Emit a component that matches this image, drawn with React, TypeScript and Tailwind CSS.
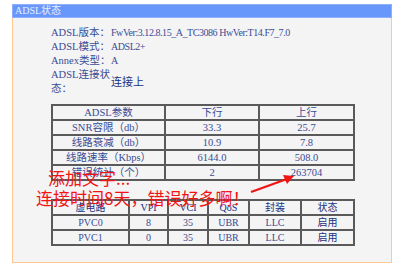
import React from "react";

const cjk = '"Liberation Serif", "Noto Sans CJK SC", serif';

const info: [string, string][] = [
  ["ADSL版本：", "FwVer:3.12.8.15_A_TC3086 HwVer:T14.F7_7.0"],
  ["ADSL模式：", "ADSL2+"],
  ["Annex类型：", "A"],
];

const stats = [
  ["SNR容限（db）", "33.3", "25.7"],
  ["线路衰减（db）", "10.9", "7.8"],
  ["线路速率（Kbps）", "6144.0", "508.0"],
  ["错误统计（个）", "2", "263704"],
];

const pvcs = [
  ["PVC0", "8", "35", "UBR", "LLC", "启用"],
  ["PVC1", "0", "35", "UBR", "LLC", "启用"],
];

const cell = "border-2 border-[#5a5a5a] p-0 text-center h-[15px] leading-[11px]";

export default function App() {
  return (
    <div
      className="w-[400px] h-[266px] bg-white relative overflow-hidden text-[11px] text-[#3a4c94]"
      style={{ fontFamily: cjk }}
    >
      <div className="pt-[4px] pl-[12px] w-[392px]">
        <div className="h-[14px] bg-[#6797fa] border border-[#8db0fc] text-[10px] leading-[12px] pl-[2px] text-[#e8eeff]">
          ADSL状态
        </div>
        <div className="h-[245px] bg-[#f4f4f4] border-l border-r border-b border-[#ffc88e] pt-[8px] pl-[38px]">
          <div className="flex flex-col text-[10.5px] leading-[14px]">
            {info.map(([k, v]) => (
              <div key={k} className="flex h-[14px] items-center">
                <div className="w-[60px] whitespace-nowrap">{k}</div>
                <div className="whitespace-nowrap text-[10px] tracking-[-0.45px]">{v}</div>
              </div>
            ))}
            <div className="flex items-center h-[28px]">
              <div className="w-[60px] whitespace-nowrap">
                ADSL连接状
                <br />
                态：
              </div>
              <div className="text-[#22307e] text-[11px]">连接上</div>
            </div>
          </div>

          <table className="mt-[8px] border-collapse table-fixed w-[302px] text-[10.5px]">
            <colgroup>
              <col className="w-[113px]" />
              <col className="w-[94px]" />
              <col className="w-[95px]" />
            </colgroup>
            <tbody>
              <tr>
                <td className={cell}>ADSL参数</td>
                <td className={cell}>下行</td>
                <td className={cell}>上行</td>
              </tr>
              {stats.map((r) => (
                <tr key={r[0]}>
                  {r.map((c, i) => (
                    <td key={i} className={cell}>
                      {c}
                    </td>
                  ))}
                </tr>
              ))}
            </tbody>
          </table>

          <table className="mt-[18px] border-collapse table-fixed w-[302px] text-[10px]">
            <colgroup>
              <col className="w-[77px]" />
              <col className="w-[39px]" />
              <col className="w-[40px]" />
              <col className="w-[41px]" />
              <col className="w-[52px]" />
              <col className="w-[53px]" />
            </colgroup>
            <tbody>
              <tr className="text-[#22307e]">
                {["虚电路", "VPI", "VCI", "QoS", "封装", "状态"].map((h) => (
                  <td key={h} className={cell}>
                    {h}
                  </td>
                ))}
              </tr>
              {pvcs.map((r) => (
                <tr key={r[0]}>
                  {r.map((c, i) => (
                    <td key={i} className={`${cell} ${i === 5 ? "text-[#22307e]" : ""}`}>
                      {c}
                    </td>
                  ))}
                </tr>
              ))}
            </tbody>
          </table>
        </div>
      </div>

      {/* red annotation over the page */}
      <div
        className="absolute left-[36px] top-[168px] text-[17px] leading-[20px] text-[#f21313] whitespace-nowrap"
        style={{ fontFamily: '"Noto Sans CJK SC", sans-serif' }}
      >
        <div className="pl-[12px]">添加文字...</div>
        <div>连接时间8天，错误好多啊！</div>
      </div>
      <svg className="absolute left-[245px] top-[170px]" width="55" height="28" viewBox="0 0 55 28">
        <line x1="6" y1="22" x2="42" y2="9" stroke="#f21313" strokeWidth="2.2" />
        <polygon points="49,6 38,5 42,14" fill="#f21313" />
      </svg>
    </div>
  );
}
